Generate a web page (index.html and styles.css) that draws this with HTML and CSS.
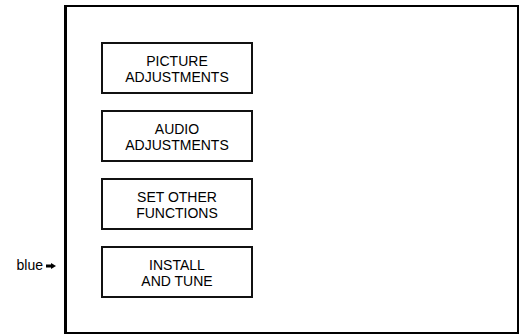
FILE: index.html
```html
<!DOCTYPE html>
<html>
<head>
<meta charset="utf-8">
<link rel="stylesheet" href="styles.css">
</head>
<body>
<div class="page">
  <div class="side">
    <div class="label">
      <span class="label-text">blue</span>
      <svg class="arrow" width="10" height="6" viewBox="0 0 10 6"><rect x="0" y="1.5" width="5.5" height="3" fill="#000"/><polygon points="5,0 10,3 5,6" fill="#000"/></svg>
    </div>
  </div>
  <div class="frame">
    <div class="menu">
      <div class="item">PICTURE<br>ADJUSTMENTS</div>
      <div class="item">AUDIO<br>ADJUSTMENTS</div>
      <div class="item">SET OTHER<br>FUNCTIONS</div>
      <div class="item">INSTALL<br>AND TUNE</div>
    </div>
  </div>
</div>
</body>
</html>
```

FILE: styles.css
```css
html, body {
  margin: 0;
  padding: 0;
  background: #fff;
}
body {
  width: 520px;
  height: 334px;
  overflow: hidden;
  font-family: "Liberation Sans", Arial, sans-serif;
  color: #000;
}
.page {
  display: flex;
  padding-top: 5px;
  height: 329px;
}
.side {
  width: 64px;
  display: flex;
  flex-direction: column;
  padding-top: 253px;
  box-sizing: border-box;
}
.label {
  display: flex;
  align-items: center;
  justify-content: flex-end;
  gap: 3px;
  padding-right: 8px;
  font-size: 14px;
  line-height: 14px;
}
.arrow {
  display: block;
  margin-top: 2px;
}
.frame {
  width: 455px;
  height: 329px;
  box-sizing: border-box;
  border-top: 2px solid #000;
  border-right: 2px solid #000;
  border-bottom: 2px solid #000;
  border-left: 3px solid #000;
  padding: 35px 0 0 34px;
}
.menu {
  display: flex;
  flex-direction: column;
  gap: 16px;
}
.item {
  width: 152px;
  height: 52px;
  box-sizing: border-box;
  border: 2px solid #111;
  display: flex;
  align-items: center;
  justify-content: center;
  text-align: center;
  font-size: 14px;
  line-height: 16px;
  padding-top: 1px;
}
```
